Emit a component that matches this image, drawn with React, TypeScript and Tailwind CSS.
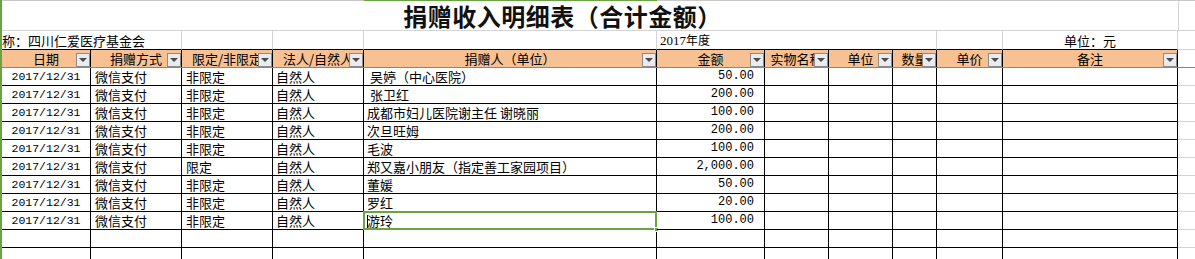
const cols = "grid grid-cols-[89px_91px_91px_91px_293px_108px_64px_64px_44px_66px_175px_1fr]";

const headers = [
  "日期",
  "捐赠方式",
  "限定/非限定",
  "法人/自然人",
  "捐赠人（单位）",
  "金额",
  "实物名称",
  "单位",
  "数量",
  "单价",
  "备注",
];

const rows = [
  { name: " 吴婷（中心医院）", amount: "50.00", limit: "非限定" },
  { name: " 张卫红", amount: "200.00", limit: "非限定" },
  { name: "成都市妇儿医院谢主任 谢晓丽", amount: "100.00", limit: "非限定" },
  { name: "次旦旺姆", amount: "200.00", limit: "非限定" },
  { name: "毛波", amount: "100.00", limit: "非限定" },
  { name: "郑又嘉小朋友（指定善工家园项目）", amount: "2,000.00", limit: "限定" },
  { name: "董媛", amount: "50.00", limit: "非限定" },
  { name: "罗红", amount: "20.00", limit: "非限定" },
  { name: "游玲", amount: "100.00", limit: "非限定", selected: true },
];

function DropButton() {
  return (
    <span className="absolute right-0 bottom-0 w-[14px] h-[14px] border border-[#8c8c8c] bg-[#e9ebee] flex items-center justify-center">
      <svg width="8" height="4" viewBox="0 0 8 4">
        <path d="M0 0H8L4 4Z" fill="#4a4a4a" />
      </svg>
    </span>
  );
}

function Cell({ children, className = "" }: { children?: React.ReactNode; className?: string }) {
  return (
    <div className={`relative border-r border-black flex items-end overflow-hidden whitespace-pre pb-[1px] ${className}`}>
      {children}
    </div>
  );
}

export default function App() {
  return (
    <div className="w-[1195px] h-[259px] overflow-hidden bg-white border-l-2 border-[#6aa341] font-['Noto_Sans_CJK_SC',sans-serif] text-[13px] leading-[15px] text-black">
      {/* top gridline, selected column highlighted */}
      <div className={`${cols} h-px bg-[#c8c8c8]`}>
        <div className="col-start-5 bg-[#6aa341]" />
      </div>

      {/* Title */}
      <div className={`${cols} h-[30px] border-b border-[#d4d4d4]`}>
        <div className="col-span-11 flex items-center justify-center pr-[55px] text-[24px] leading-[26px] font-bold tracking-[0.5px] text-[#111]">
          捐赠收入明细表（合计金额）
        </div>
        <div className="border-l border-[#d4d4d4]" />
      </div>

      {/* Info row */}
      <div className={`${cols} h-[19px]`}>
        <div className="col-span-2 border-r border-b border-r-[#d4d4d4] border-b-black flex items-center whitespace-nowrap">
          称：四川仁爱医疗基金会
        </div>
        <div className="border-r border-b border-r-[#d4d4d4] border-b-black" />
        <div className="border-r border-b border-r-[#d4d4d4] border-b-black" />
        <div className="border-r border-b border-r-[#d4d4d4] border-b-black" />
        <div className="col-span-4 border-r border-b border-r-[#d4d4d4] border-b-black flex items-center pl-[3px] text-[12px]">
          <span>
            <span className="font-['Liberation_Serif',serif] text-[13px]">2017</span>年度
          </span>
        </div>
        <div className="border-r border-b border-r-[#d4d4d4] border-b-black" />
        <div className="border-r border-b border-r-[#d4d4d4] border-b-black flex items-center justify-center">
          单位：元
        </div>
        <div className="border-b border-[#d4d4d4]" />
      </div>

      {/* Header */}
      <div className={`${cols} h-[18px] border-b border-[#6aa341]`}>
        {headers.map((h) => (
          <div
            key={h}
            className="relative bg-[#f8c193] border-r border-black flex items-center justify-center overflow-hidden whitespace-nowrap"
          >
            {h}
            <DropButton />
          </div>
        ))}
        <div />
      </div>

      {/* Data */}
      {rows.map((r, i) => (
        <div key={i} className={`${cols} h-[18px]`}>
          <Cell className="border-b justify-center font-['Liberation_Mono','Noto_Sans_CJK_SC',monospace] text-[11.5px]">
            2017/12/31
          </Cell>
          <Cell className="border-b pl-[4px]">微信支付</Cell>
          <Cell className="border-b pl-[4px]">{r.limit}</Cell>
          <Cell className="border-b pl-[3px]">自然人</Cell>
          <Cell className="border-b pl-[3px] overflow-visible">
            {r.name}
            {r.selected && (
              <>
                <span className="absolute left-[-1px] top-[-1px] right-[-1px] bottom-[-1px] border-2 border-[#6aa341] pointer-events-none" />
                <span className="absolute right-[-3px] bottom-[-3px] w-[5px] h-[5px] bg-[#6aa341] border border-white" />
                <span className="absolute left-[3px] top-[3px] w-px h-[13px] bg-black" />
              </>
            )}
          </Cell>
          <Cell className="border-b justify-end pr-[10px] font-['Liberation_Mono','Noto_Sans_CJK_SC',monospace] text-[12px]">
            {r.amount}
          </Cell>
          <Cell className="border-b" />
          <Cell className="border-b" />
          <Cell className="border-b" />
          <Cell className="border-b" />
          <Cell className="border-b" />
          <div className="border-b border-[#d4d4d4]" />
        </div>
      ))}

      {/* Empty rows */}
      {[0, 1].map((i) => (
        <div key={`e${i}`} className={`${cols} h-[18px]`}>
          {Array.from({ length: 11 }).map((_, j) => (
            <div key={j} className="border-r border-b border-black" />
          ))}
          <div className="border-b border-[#d4d4d4]" />
        </div>
      ))}
    </div>
  );
}
